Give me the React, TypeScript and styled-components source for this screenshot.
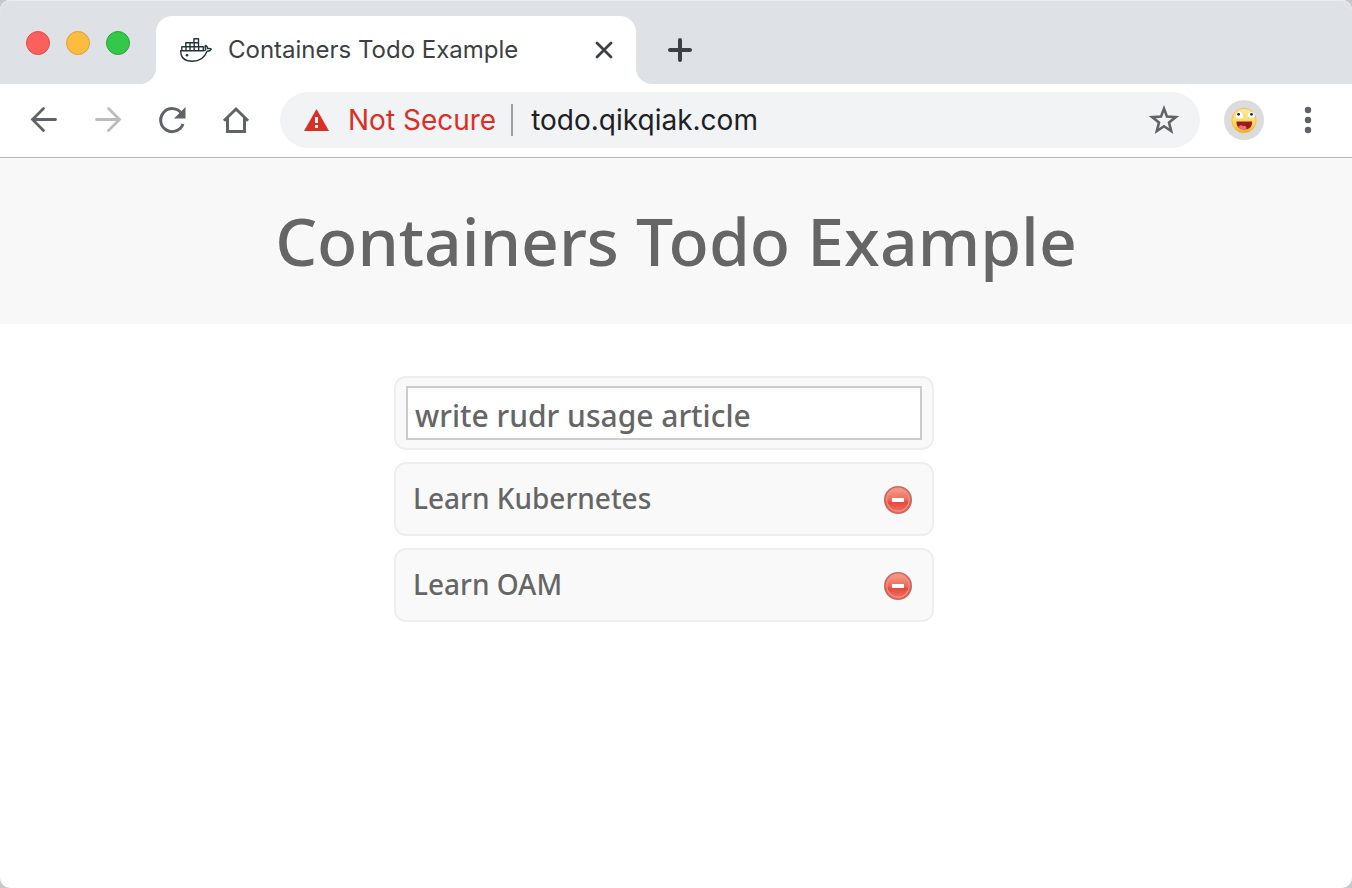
import React, { useState } from "react";
import styled, { createGlobalStyle } from "styled-components";

const GlobalStyle = createGlobalStyle`
  * { box-sizing: border-box; }
  body { margin: 0; background: #c6c7c8; }
  button, input { font: inherit; color: inherit; }
  button { border: 0; padding: 0; background: none; cursor: pointer; }
  svg { display: block; flex: none; }
`;

const Window = styled.div`
  min-height: 100vh;
  background: #fff;
  border-radius: 10px;
  overflow: hidden;
  font-family: Inter, "Liberation Sans", sans-serif;
`;

const TabStrip = styled.div`
  display: flex;
  height: 84px;
  background: #fff;
`;

const StripStart = styled.div`
  display: flex;
  gap: 16px;
  width: 156px;
  padding: 30px 26px 0;
  background: #dee1e6;
  border-top: 1px solid #e9ebee;
  border-bottom-right-radius: 16px;
`;

const StripEnd = styled.div`
  flex: 1;
  display: flex;
  align-items: center;
  padding: 15px 0 0 28px;
  background: #dee1e6;
  border-top: 1px solid #e9ebee;
  border-bottom-left-radius: 16px;
`;

const Light = styled.button<{ $fill: string; $edge: string }>`
  width: 24px;
  height: 24px;
  flex: none;
  border-radius: 50%;
  background: ${(p) => p.$fill};
  border: 1px solid ${(p) => p.$edge};
`;

const TabSlot = styled.div`
  width: 480px;
  padding-top: 15px;
  background: #dee1e6;
  border-top: 1px solid #e9ebee;
`;

const Tab = styled.div`
  display: flex;
  align-items: center;
  height: 68px;
  padding: 0 20px 0 24px;
  background: #fff;
  border-radius: 16px 16px 0 0;
  color: #3c4043;
  font-size: 24px;
`;

const TabTitle = styled.span`
  flex: 1;
  margin-left: 16px;
  padding-bottom: 2px;
  white-space: nowrap;
`;

const IconButton = styled.button<{ $width: number }>`
  display: flex;
  align-items: center;
  justify-content: center;
  flex: none;
  width: ${(p) => p.$width}px;
  height: 48px;
`;

const Toolbar = styled.div`
  display: flex;
  align-items: center;
  height: 74px;
  padding: 8px 0 9px 12px;
  border-bottom: 1px solid #b4b5b6;
`;

const AddressBar = styled.div`
  flex: 1;
  display: flex;
  align-items: center;
  height: 56px;
  margin: 0 24px 0 12px;
  padding: 0 12px 0 24px;
  border-radius: 28px;
  background: #f1f3f4;
  font-size: 28px;
`;

const Security = styled.button`
  display: flex;
  align-items: center;
  gap: 19px;
  height: 32px;
  padding-right: 15px;
  border-right: 2px solid #9a9da0;
  color: #d93025;
  white-space: nowrap;
`;

const UrlInput = styled.input`
  flex: 1;
  min-width: 0;
  padding: 0 0 0 18px;
  border: 0;
  outline: 0;
  background: none;
  color: #202124;
`;

const Avatar = styled.button`
  display: flex;
  align-items: center;
  justify-content: center;
  width: 40px;
  height: 40px;
  border-radius: 50%;
  background: #dcdcdc;
`;

const Page = styled.main`
  color: #666;
  font-family: "Noto Sans", "Open Sans", sans-serif;
  font-weight: 500;
`;

const Header = styled.header`
  display: flex;
  align-items: center;
  justify-content: center;
  height: 166px;
  padding-bottom: 2px;
  background: #f8f8f8;
`;

const Title = styled.h1`
  margin: 0;
  font-size: 66px;
  line-height: 80px;
  font-weight: 500;
  text-shadow: 0 2px 2px #fff;
`;

const Todos = styled.form`
  display: flex;
  flex-direction: column;
  gap: 12px;
  max-width: 564px;
  margin: 52px auto 0;
  padding-right: 24px;
`;

const List = styled.ul`
  display: flex;
  flex-direction: column;
  gap: 12px;
  margin: 0;
  padding: 0;
  list-style: none;
`;

const Card = styled.div<{ $inset: string }>`
  display: flex;
  align-items: center;
  justify-content: space-between;
  height: 74px;
  padding: ${(p) => p.$inset};
  border: 2px solid #eee;
  border-radius: 12px;
  background: #f9f9f9;
  font-size: 28px;
  text-shadow: 0 2px 2px #fff;
`;

const ItemText = styled.span`
  padding-bottom: 4px;
`;

const TodoInput = styled.input`
  width: 100%;
  height: 54px;
  padding: 4px 8px 0 7px;
  border: 2px solid #ccc;
  outline: 0;
  background: #fff;
  font-size: 30px;
`;

const DockerIcon = () => (
  <svg width="32" height="24" viewBox="0 0 32 24" fill="none" stroke="#24333c" strokeWidth="1.4" strokeLinejoin="round">
    <path d="M1.800 12.500V8.700H23.300v3.800M5.800 8.700V4.700h12.700v4M13.900 4.700V.8h4.600v3.900M6 8.700v3.800M10 4.700v7.800M14.200 4.700v7.800M18.700 8.700v3.800" />
    <path d="M.7 12.700h23c1.200 0 2-.7 2.200-1.600-1-1.300-1.100-2.600-.3-3.700 1.300.8 2 1.900 2.200 3.200 1.400-.4 2.400-.2 3.500.5-.8 1.500-2.300 2.200-4.200 2.200-2.600 6.700-7.400 10-14.700 10C4.800 23.300.7 19.600.7 12.700z" />
    <circle cx="7" cy="17.300" r="1.300" fill="#24333c" stroke="none" />
  </svg>
);

const CloseIcon = () => (
  <svg width="20" height="20" viewBox="0 0 20 20" stroke="#3c4043" strokeWidth="2.800" strokeLinecap="round">
    <path d="M3 3l14 14M17 3L3 17" />
  </svg>
);

const PlusIcon = () => (
  <svg width="24" height="24" viewBox="0 0 24 24" stroke="#3c4043" strokeWidth="4" strokeLinecap="round">
    <path d="M12 2v20M2 12h20" />
  </svg>
);

const ArrowIcon = ({ forward = false }: { forward?: boolean }) => (
  <svg width="28" height="28" viewBox="0 0 28 28" fill="none" stroke={forward ? "#babcbe" : "#5f6368"} strokeWidth="2.800" strokeLinecap="round">
    <path d={forward ? "M2.500 13.500h23M14.500 2.500l11 11-11 11" : "M25.500 13.500h-23M13.500 2.500l-11 11 11 11"} />
  </svg>
);

const ReloadIcon = () => (
  <svg width="28" height="28" viewBox="0 0 28 28" fill="none" stroke="#5f6368" strokeWidth="3">
    <path d="M23.600 7.500A11.500 11.500 0 1 0 25 18" />
    <path d="M27.500 1v11.500H16z" fill="#5f6368" stroke="none" />
  </svg>
);

const HomeIcon = () => (
  <svg width="28" height="28" viewBox="0 0 28 28" fill="none" stroke="#5f6368" strokeWidth="3">
    <path d="M2 14.700L14 3l12 11.700M5.500 12v13.500h17V12" />
  </svg>
);

const WarningIcon = () => (
  <svg width="25" height="22" viewBox="0 0 25 22">
    <path d="M12.500 0L25 22H0z" fill="#d93025" />
    <path d="M11 8h3v6h-3zM11 16h3v3h-3z" fill="#f1f3f4" />
  </svg>
);

const StarIcon = () => (
  <svg width="30" height="30" viewBox="0 0 30 30" fill="none" stroke="#5f6368" strokeWidth="2.600">
    <path d="M15 3.600l3 8 8.700.6-6.700 5.300 2.200 8.500L15 21.200l-7.200 4.800 2.200-8.500-6.700-5.300 8.700-.6z" />
  </svg>
);

const FaceIcon = () => (
  <svg width="26" height="26" viewBox="0 0 26 26">
    <defs>
      <linearGradient id="skin" x1="0" y1="0" x2="0" y2="1">
        <stop offset="0" stopColor="#fdeaa0" />
        <stop offset=".7" stopColor="#fbd558" />
        <stop offset="1" stopColor="#eda52c" />
      </linearGradient>
    </defs>
    <circle cx="13" cy="13.500" r="12.200" fill="url(#skin)" stroke="#eeb44b" strokeWidth=".8" />
    <path d="M5 10.500c-.5-3 1-5.500 3.500-5.500s4 2 3.800 5.500c-2 1.300-5.300 1.300-7.300 0zM16.800 9.500c-.3-3 1.200-4.500 3.500-4.500s3.700 2 3.700 4.500c-1.800 1.500-5.200 1.800-7.200 0z" fill="#fff" />
    <circle cx="7.600" cy="7.300" r="1.400" fill="#222" />
    <circle cx="20.500" cy="7.300" r="1.400" fill="#222" />
    <path d="M5.500 14.500h15.500c.5 5-2.500 8-7.500 8s-8.500-3-8-8z" fill="#9c1a1c" />
    <path d="M7.500 20c1.500-2.300 3.300-1.900 4.900-.8 1.500-1 2.500-.5 3.300 2.300-2.500 1.200-6.500.8-8.200-1.500z" fill="#ef6f83" />
  </svg>
);

const MenuIcon = () => (
  <svg width="8" height="28" viewBox="0 0 8 28" fill="#5f6368">
    <circle cx="4" cy="4" r="3.200" />
    <circle cx="4" cy="14" r="3.200" />
    <circle cx="4" cy="24" r="3.200" />
  </svg>
);

const RemoveIcon = () => (
  <svg width="28" height="28" viewBox="0 0 28 28">
    <defs>
      <linearGradient id="remove" x1="0" y1="0" x2="0" y2="1">
        <stop offset="0" stopColor="#f6a596" />
        <stop offset=".5" stopColor="#ef6a58" />
        <stop offset=".6" stopColor="#e6483f" />
        <stop offset="1" stopColor="#ee776a" />
      </linearGradient>
    </defs>
    <circle cx="14" cy="14" r="13.200" fill="url(#remove)" stroke="#cc6860" strokeWidth="1.600" />
    <circle cx="14" cy="14" r="11.200" fill="none" stroke="#f29184" strokeWidth="1.200" />
    <path d="M8 12h12v4H8z" fill="#fff" />
  </svg>
);

export default function App() {
  const [draft, setDraft] = useState("write rudr usage article");
  const [items, setItems] = useState(["Learn Kubernetes", "Learn OAM"]);

  const addItem = (event: React.FormEvent) => {
    event.preventDefault();
    if (draft.trim()) {
      setItems([...items, draft.trim()]);
      setDraft("");
    }
  };

  return (
    <Window>
      <GlobalStyle />
      <TabStrip>
        <StripStart>
          <Light aria-label="Close window" $fill="#fc605c" $edge="#e14b48" />
          <Light aria-label="Minimize window" $fill="#fdbc40" $edge="#dfa03a" />
          <Light aria-label="Zoom window" $fill="#34c84a" $edge="#24a936" />
        </StripStart>
        <TabSlot>
          <Tab>
            <DockerIcon />
            <TabTitle>Containers Todo Example</TabTitle>
            <IconButton aria-label="Close tab" $width={24}><CloseIcon /></IconButton>
          </Tab>
        </TabSlot>
        <StripEnd>
          <IconButton aria-label="New tab" $width={32}><PlusIcon /></IconButton>
        </StripEnd>
      </TabStrip>
      <Toolbar>
        <IconButton aria-label="Back" $width={64}><ArrowIcon /></IconButton>
        <IconButton aria-label="Forward" $width={64}><ArrowIcon forward /></IconButton>
        <IconButton aria-label="Reload" $width={64}><ReloadIcon /></IconButton>
        <IconButton aria-label="Home" $width={64}><HomeIcon /></IconButton>
        <AddressBar>
          <Security><WarningIcon />Not Secure</Security>
          <UrlInput aria-label="Address" defaultValue="todo.qikqiak.com" />
          <IconButton aria-label="Bookmark this page" $width={48}><StarIcon /></IconButton>
        </AddressBar>
        <Avatar aria-label="Profile"><FaceIcon /></Avatar>
        <IconButton aria-label="Menu" $width={88}><MenuIcon /></IconButton>
      </Toolbar>
      <Page>
        <Header>
          <Title>Containers Todo Example</Title>
        </Header>
        <Todos onSubmit={addItem}>
          <Card $inset="0 10px">
            <TodoInput aria-label="New todo" value={draft} onChange={(e) => setDraft(e.target.value)} />
          </Card>
          <List>
            {items.map((item) => (
              <Card as="li" key={item} $inset="2px 20px 0 17px">
                <ItemText>{item}</ItemText>
                <button type="button" aria-label={`Remove ${item}`} onClick={() => setItems(items.filter((i) => i !== item))}>
                  <RemoveIcon />
                </button>
              </Card>
            ))}
          </List>
        </Todos>
      </Page>
    </Window>
  );
}
